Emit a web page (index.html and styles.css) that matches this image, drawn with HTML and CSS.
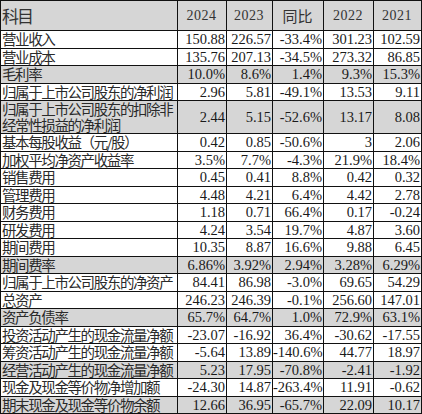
FILE: index.html
```html
<!DOCTYPE html>
<html lang="zh-CN">
<head>
    <meta charset="UTF-8">
    <meta name="viewport" content="width=device-width, initial-scale=1.0">
    <title>财务数据</title>
    <link rel="stylesheet" href="styles.css">
</head>
<body>
    <table class="fin-table">
        <colgroup>
            <col class="c-name">
            <col class="c-2024">
            <col class="c-2023">
            <col class="c-yoy">
            <col class="c-2022">
            <col class="c-2021">
        </colgroup>
        <tr class="head shade">
            <td class="name">科目</td>
            <td>2024</td>
            <td>2023</td>
            <td class="cn">同比</td>
            <td>2022</td>
            <td>2021</td>
        </tr>
        <tr><td class="name">营业收入</td><td>150.88</td><td>226.57</td><td>-33.4%</td><td>301.23</td><td>102.59</td></tr>
        <tr><td class="name">营业成本</td><td>135.76</td><td>207.13</td><td>-34.5%</td><td>273.32</td><td>86.85</td></tr>
        <tr class="shade"><td class="name">毛利率</td><td>10.0%</td><td>8.6%</td><td>1.4%</td><td>9.3%</td><td>15.3%</td></tr>
        <tr><td class="name">归属于上市公司股东的净利润</td><td>2.96</td><td>5.81</td><td>-49.1%</td><td>13.53</td><td>9.11</td></tr>
        <tr class="shade tall"><td class="name">归属于上市公司股东的扣除非<br>经常性损益的净利润</td><td>2.44</td><td>5.15</td><td>-52.6%</td><td>13.17</td><td>8.08</td></tr>
        <tr><td class="name">基本每股收益（元/股）</td><td>0.42</td><td>0.85</td><td>-50.6%</td><td>3</td><td>2.06</td></tr>
        <tr><td class="name">加权平均净资产收益率</td><td>3.5%</td><td>7.7%</td><td>-4.3%</td><td>21.9%</td><td>18.4%</td></tr>
        <tr><td class="name">销售费用</td><td>0.45</td><td>0.41</td><td>8.8%</td><td>0.42</td><td>0.32</td></tr>
        <tr><td class="name">管理费用</td><td>4.48</td><td>4.21</td><td>6.4%</td><td>4.42</td><td>2.78</td></tr>
        <tr><td class="name">财务费用</td><td>1.18</td><td>0.71</td><td>66.4%</td><td>0.17</td><td>-0.24</td></tr>
        <tr><td class="name">研发费用</td><td>4.24</td><td>3.54</td><td>19.7%</td><td>4.87</td><td>3.60</td></tr>
        <tr><td class="name">期间费用</td><td>10.35</td><td>8.87</td><td>16.6%</td><td>9.88</td><td>6.45</td></tr>
        <tr class="shade"><td class="name">期间费率</td><td>6.86%</td><td>3.92%</td><td>2.94%</td><td>3.28%</td><td>6.29%</td></tr>
        <tr><td class="name">归属于上市公司股东的净资产</td><td>84.41</td><td>86.98</td><td>-3.0%</td><td>69.65</td><td>54.29</td></tr>
        <tr><td class="name">总资产</td><td>246.23</td><td>246.39</td><td>-0.1%</td><td>256.60</td><td>147.01</td></tr>
        <tr class="shade"><td class="name">资产负债率</td><td>65.7%</td><td>64.7%</td><td>1.0%</td><td>72.9%</td><td>63.1%</td></tr>
        <tr><td class="name">投资活动产生的现金流量净额</td><td>-23.07</td><td>-16.92</td><td>36.4%</td><td>-30.62</td><td>-17.55</td></tr>
        <tr><td class="name">筹资活动产生的现金流量净额</td><td>-5.64</td><td>13.89</td><td>-140.6%</td><td>44.77</td><td>18.97</td></tr>
        <tr class="shade"><td class="name">经营活动产生的现金流量净额</td><td>5.23</td><td>17.95</td><td>-70.8%</td><td>-2.41</td><td>-1.92</td></tr>
        <tr><td class="name">现金及现金等价物净增加额</td><td>-24.30</td><td>14.87</td><td>-263.4%</td><td>11.91</td><td>-0.62</td></tr>
        <tr class="shade"><td class="name">期末现金及现金等价物余额</td><td>12.66</td><td>36.95</td><td>-65.7%</td><td>22.09</td><td>10.17</td></tr>
    </table>
</body>
</html>
```

FILE: styles.css
```css
body {
    margin: 0;
    background: #fff;
}
.fin-table {
    border-collapse: collapse;
    table-layout: fixed;
    width: 421px;
    font-family: "Liberation Serif", "Times New Roman", serif;
    font-size: 14.5px;
    color: #1a1a1a;
}
.c-name { width: 177px; }
.c-2024 { width: 49px; }
.c-2023 { width: 46px; }
.c-yoy { width: 51px; }
.c-2022 { width: 50px; }
.c-2021 { width: 48px; }
.fin-table td {
    border: 1px solid #111;
    height: 16.5px;
    padding: 0 1px 0 0;
    text-align: right;
    line-height: 16px;
    white-space: nowrap;
}
.fin-table td.name {
    text-align: left;
    padding: 0 0 0 1px;
    font-family: "Noto Sans CJK SC", sans-serif;
    font-size: 14.5px;
    letter-spacing: -1.4px;
    color: #2a2a2a;
}
.fin-table .shade td {
    background-color: #d6d6d6;
}
.fin-table .head td {
    height: 29px;
    text-align: center;
    font-size: 14px;
    letter-spacing: 0.5px;
    color: #333;
}
.fin-table .head td.name {
    text-align: left;
    font-size: 17px;
    letter-spacing: -2px;
}
.fin-table .head td.cn {
    font-family: "Noto Sans CJK SC", sans-serif;
    font-size: 15px;
    letter-spacing: 0;
}
.fin-table .tall td {
    height: 32px;
}
.fin-table .tall td.name {
    line-height: 16px;
}
```
